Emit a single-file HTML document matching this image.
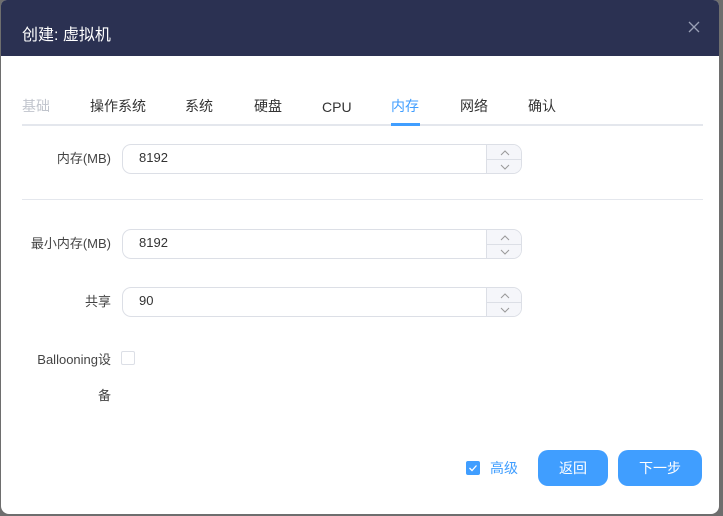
<!DOCTYPE html>
<html><head><meta charset="utf-8"><style>
*{box-sizing:border-box;margin:0;padding:0}
body{width:723px;height:516px;background:#6e6e6e;font-family:"Liberation Sans","Noto Sans CJK SC",sans-serif;position:relative;overflow:hidden}
.dlg{position:absolute;left:1px;top:0;width:718px;height:514px;background:#fff;border-radius:6px 6px 8px 8px;overflow:hidden}
.hd{position:absolute;left:0;top:0;width:100%;height:56px;background:#2b3152}
.ttl{position:absolute;left:21px;top:21px;color:#fff;font-size:16px}
.x{position:absolute;left:686px;top:20px;width:14px;height:14px}
.t{position:absolute;top:96px;font-size:14px;color:#333;line-height:20px}
.inp{position:absolute;left:121px;width:400px;height:30px;border:1px solid #dcdfe6;border-radius:9px;overflow:hidden}
.inp span{position:absolute;left:16px;top:5px;font-size:13px;color:#333}
.sp{position:absolute;right:0;top:0;width:35px;height:100%;background:#f5f6fa;border-left:1px solid #dcdfe6}
.sp i{position:absolute;left:0;top:50%;width:100%;border-top:1px solid #dcdfe6}
.sp svg{position:absolute;left:13px}
.lbl{position:absolute;font-size:13px;color:#444;text-align:right}
.btn{position:absolute;top:450px;height:36px;background:#409eff;border-radius:10px;color:#fff;font-size:14px;text-align:center;line-height:36px}
</style></head><body>
<div class="dlg">
<div class="hd"><div class="ttl">创建: 虚拟机</div>
<svg class="x" viewBox="0 0 14 14"><path d="M2 2L12 12M12 2L2 12" stroke="#9aa0b5" stroke-width="1.3"/></svg></div>
<div class="t" style="left:21px;color:#c0c4cc">基础</div>
<div class="t" style="left:89px">操作系统</div>
<div class="t" style="left:184px">系统</div>
<div class="t" style="left:253px">硬盘</div>
<div class="t" style="left:321px;top:97px">CPU</div>
<div class="t" style="left:390px;color:#409eff">内存</div>
<div class="t" style="left:459px">网络</div>
<div class="t" style="left:527px">确认</div>
<div style="position:absolute;left:21px;top:124px;width:681px;height:2px;background:#e4e7ed"></div>
<div style="position:absolute;left:390px;top:123px;width:29px;height:3px;background:#409eff"></div>

<div class="lbl" style="left:20px;width:90px;top:148px">内存(MB)</div>
<div class="inp" style="top:144px"><span>8192</span><div class="sp"><i></i>
<svg style="top:5px" width="10" height="6"><path d="M1 5L5 1L9 5" stroke="#999" fill="none"/></svg>
<svg style="top:19px" width="10" height="6"><path d="M1 1L5 5L9 1" stroke="#999" fill="none"/></svg></div></div>

<div style="position:absolute;left:21px;top:199px;width:681px;height:1px;background:#e4e7ed"></div>

<div class="lbl" style="left:10px;width:100px;top:233px">最小内存(MB)</div>
<div class="inp" style="top:229px"><span>8192</span><div class="sp"><i></i>
<svg style="top:5px" width="10" height="6"><path d="M1 5L5 1L9 5" stroke="#999" fill="none"/></svg>
<svg style="top:19px" width="10" height="6"><path d="M1 1L5 5L9 1" stroke="#999" fill="none"/></svg></div></div>

<div class="lbl" style="left:20px;width:90px;top:291px">共享</div>
<div class="inp" style="top:287px"><span>90</span><div class="sp"><i></i>
<svg style="top:5px" width="10" height="6"><path d="M1 5L5 1L9 5" stroke="#999" fill="none"/></svg>
<svg style="top:19px" width="10" height="6"><path d="M1 1L5 5L9 1" stroke="#999" fill="none"/></svg></div></div>

<div class="lbl" style="left:10px;width:100px;top:349px">Ballooning设</div>
<div class="lbl" style="left:10px;width:100px;top:385px">备</div>
<div style="position:absolute;left:120px;top:351px;width:14px;height:14px;border:1px solid #dcdfe6;border-radius:2px"></div>

<div style="position:absolute;left:465px;top:461px;width:14px;height:14px;background:#409eff;border-radius:2px"><svg width="14" height="14"><path d="M3.5 7L6 9.5L10.5 4.5" stroke="#fff" stroke-width="1.3" fill="none"/></svg></div>
<div style="position:absolute;left:489px;top:458px;font-size:14px;color:#409eff">高级</div>
<div class="btn" style="left:537px;width:70px">返回</div>
<div class="btn" style="left:617px;width:84px">下一步</div>
</div>
</body></html>
